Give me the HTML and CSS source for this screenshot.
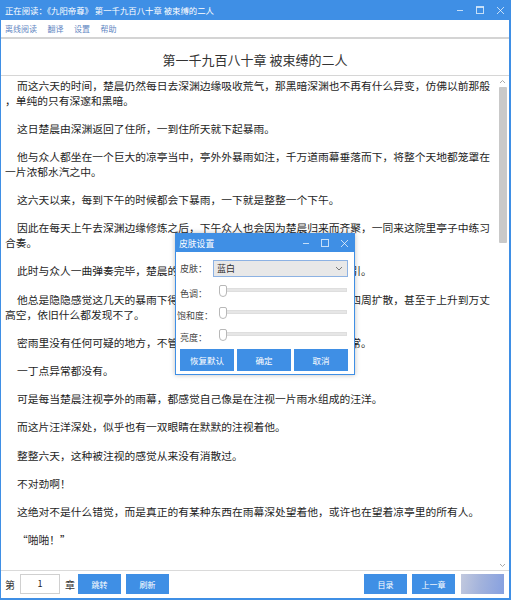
FILE: index.html
```html
<!DOCTYPE html>
<html lang="zh-CN">
<head>
  <meta charset="UTF-8">
  <title>正在阅读：《九阳帝尊》</title>
  <link rel="stylesheet" href="styles.css">
</head>
<body>
<div class="window">
  <div class="titlebar">
    <span class="title">正在阅读：《九阳帝尊》 第一千九百八十章 被束缚的二人</span>
    <div class="win-buttons">
      <svg width="8" height="8" viewBox="0 0 8 8"><path d="M1 4.5H7" stroke="currentColor" stroke-width="1"/></svg>
      <svg width="10" height="8" viewBox="0 0 10 8"><rect x="1.5" y="0.5" width="7" height="7" fill="none" stroke="currentColor" stroke-width="1"/><path d="M1.5 1.5H8.5" stroke="currentColor"/></svg>
      <svg width="9" height="9" viewBox="0 0 9 9"><path d="M1 1L8 8M8 1L1 8" stroke="currentColor" stroke-width="1"/></svg>
    </div>
  </div>

  <div class="menubar">
    <span>离线阅读</span><span>翻译</span><span>设置</span><span>帮助</span>
  </div>

  <div class="chapter-head">
    <h1>第一千九百八十章 被束缚的二人</h1>
  </div>

  <div class="reader">
    <div class="text">
      <p>而这六天的时间，楚晨仍然每日去深渊边缘吸收荒气，那黑暗深渊也不再有什么异变，仿佛以前那般<br>，单纯的只有深邃和黑暗。</p>
      <p>这日楚晨由深渊返回了住所，一到住所天就下起暴雨。</p>
      <p>他与众人都坐在一个巨大的凉亭当中，亭外外暴雨如注，千万道雨幕垂落而下，将整个天地都笼罩在<br>一片浓郁水汽之中。</p>
      <p>这六天以来，每到下午的时候都会下暴雨，一下就是整整一个下午。</p>
      <p>因此在每天上午去深渊边缘修炼之后，下午众人也会因为楚晨归来而齐聚，一同来这院里亭子中练习<br>合奏。</p>
      <p>此时与众人一曲弹奏完毕，楚晨的目光再一次被亭外那无边的雨幕所吸引。</p>
      <p>他总是隐隐感觉这几天的暴雨下得有些古怪，可是他将神识释放出去向四周扩散，甚至于上升到万丈<br>高空，依旧什么都发现不了。</p>
      <p>密雨里没有任何可疑的地方，不管他如何仔细地探查，都没有任何的异常。</p>
      <p>一丁点异常都没有。</p>
      <p>可是每当楚晨注视亭外的雨幕，都感觉自己像是在注视一片雨水组成的汪洋。</p>
      <p>而这片汪洋深处，似乎也有一双眼睛在默默的注视着他。</p>
      <p>整整六天，这种被注视的感觉从来没有消散过。</p>
      <p>不对劲啊！</p>
      <p>这绝对不是什么错觉，而是真正的有某种东西在雨幕深处望着他，或许也在望着凉亭里的所有人。</p>
      <p>“啪啪！”</p>
    </div>
    <div class="scrollbar">
      <svg class="arrow" width="7" height="5" viewBox="0 0 7 5"><path d="M1 4L3.5 1.5L6 4" fill="none" stroke="#a8a8a8"/></svg>
      <div class="track"><div class="thumb"></div></div>
      <svg class="arrow" width="7" height="5" viewBox="0 0 7 5"><path d="M1 1L3.5 3.5L6 1" fill="none" stroke="#a8a8a8"/></svg>
    </div>
  </div>

  <div class="bottombar">
    <div class="group">
      <span class="word">第</span>
      <div class="page-input">1</div>
      <span class="word">章</span>
      <button class="btn">跳转</button>
      <button class="btn">刷新</button>
    </div>
    <div class="group">
      <button class="btn">目录</button>
      <button class="btn">上一章</button>
      <button class="btn faded"></button>
    </div>
  </div>

  <div class="dialog">
    <div class="dlg-title">
      <span>皮肤设置</span>
      <div class="win-buttons small">
        <svg width="8" height="8" viewBox="0 0 8 8"><path d="M1 4.5H7" stroke="currentColor" stroke-width="1"/></svg>
        <svg width="10" height="8" viewBox="0 0 10 8"><rect x="1.5" y="0.5" width="7" height="7" fill="none" stroke="currentColor" stroke-width="1"/></svg>
        <svg width="9" height="9" viewBox="0 0 9 9"><path d="M1 1L8 8M8 1L1 8" stroke="currentColor" stroke-width="1"/></svg>
      </div>
    </div>
    <div class="dlg-body">
      <div class="row skin">
        <span class="label">皮肤：</span>
        <div class="select">
          <span>蓝白</span>
          <svg width="8" height="5" viewBox="0 0 8 5"><path d="M1 1L4 4L7 1" fill="none" stroke="#777"/></svg>
        </div>
      </div>
      <div class="row">
        <span class="label">色调：</span>
        <div class="slider"><div class="knob"></div></div>
      </div>
      <div class="row">
        <span class="label wide">饱和度：</span>
        <div class="slider"><div class="knob"></div></div>
      </div>
      <div class="row">
        <span class="label">亮度：</span>
        <div class="slider"><div class="knob"></div></div>
      </div>
      <div class="dlg-actions">
        <button class="btn">恢复默认</button>
        <button class="btn">确定</button>
        <button class="btn">取消</button>
      </div>
    </div>
  </div>
</div>
</body>
</html>
```

FILE: styles.css
```css
body {
  margin: 0;
  font-family: "Noto Sans CJK SC", "Microsoft YaHei", sans-serif;
  overflow: hidden;
}
.window {
  position: relative;
  width: 511px;
  height: 600px;
  box-sizing: border-box;
  background: #3f8fe5;
  padding: 0 2px 2px 1px;
  display: flex;
  flex-direction: column;
}
.titlebar {
  height: 20px;
  flex: none;
  display: flex;
  align-items: center;
  justify-content: space-between;
  padding-left: 4px;
  color: #fff;
}
.title {
  font-size: 8.4px;
  white-space: nowrap;
}
.win-buttons {
  display: flex;
  align-items: center;
  gap: 11px;
  padding-right: 4px;
  color: rgba(255,255,255,0.7);
}
.win-buttons svg {
  display: block;
}
.menubar {
  height: 17px;
  flex: none;
  background: #fff;
  border-bottom: 2px solid #d4d4d4;
  display: flex;
  align-items: center;
  gap: 10.5px;
  padding-left: 4px;
  font-size: 8px;
  color: #5f86c2;
}
.chapter-head {
  height: 36px;
  flex: none;
  background: #fff;
  border-bottom: 1px solid #d6d6d6;
  display: flex;
  align-items: center;
  justify-content: center;
}
.chapter-head h1 {
  margin: 5px 0 0;
  font-size: 13px;
  font-weight: normal;
  color: #333;
}
.reader {
  flex: 1;
  min-height: 0;
  background: #fff;
  display: flex;
}
.text {
  flex: 1;
  padding: 1.5px 0 0 4px;
  font-size: 10.75px;
  line-height: 15px;
  color: #1e1e1e;
  white-space: nowrap;
  overflow: hidden;
}
.text p {
  margin: 0 0 13.2px;
  text-indent: 12px;
}
.scrollbar {
  width: 13px;
  display: flex;
  flex-direction: column;
  align-items: center;
  padding: 3px 0 2px;
  box-sizing: border-box;
}
.scrollbar .arrow {
  flex: none;
}
.track {
  flex: 1;
  width: 8px;
  padding-top: 3px;
}
.thumb {
  height: 156px;
  background: #c9c9c9;
  border-radius: 1px;
}
.bottombar {
  height: 24px;
  flex: none;
  background: #fff;
  border-top: 1px solid #dadada;
  display: flex;
  justify-content: space-between;
  align-items: flex-start;
  padding: 3px 5px 0 4px;
  box-sizing: content-box;
}
.group {
  display: flex;
  align-items: center;
  gap: 5px;
}
.word {
  font-size: 10px;
  color: #333;
}
.page-input {
  width: 40px;
  height: 20px;
  box-sizing: border-box;
  border: 1px solid #d0d0d0;
  font-size: 9px;
  line-height: 18px;
  text-align: center;
  color: #222;
}
.btn {
  width: 43px;
  height: 20px;
  border: none;
  padding: 0;
  background: #3f8fe5;
  color: #fff;
  font-family: inherit;
  font-size: 8px;
}
.group .word + .btn {
  margin-left: -2px;
}
.btn.faded {
  margin-left: 1px;
  background: linear-gradient(100deg, #c2c9de 0%, #a3b3dc 45%, #86a0e0 100%);
}
.dialog {
  position: absolute;
  left: 175px;
  top: 233px;
  width: 180px;
  height: 142px;
  box-sizing: border-box;
  border: 1px solid #3f8fe5;
  background: #fff;
  box-shadow: 0 0 5px rgba(0,0,0,0.25);
}
.dlg-title {
  height: 18px;
  background: #3f8fe5;
  color: #fff;
  font-size: 8.8px;
  display: flex;
  align-items: center;
  justify-content: space-between;
  padding-left: 3px;
}
.win-buttons.small {
  gap: 10px;
  padding-right: 5px;
}
.dlg-body {
  padding: 8px 5px 0 4px;
}
.row {
  display: flex;
  align-items: center;
  height: 22px;
  font-size: 9px;
  color: #444;
}
.row.skin {
  height: 17px;
  margin-bottom: 5px;
}
.label {
  width: 33px;
  flex: none;
}
.label.wide {
  margin-left: -3px;
  width: 36px;
}
.select {
  width: 135px;
  height: 17px;
  box-sizing: border-box;
  border: 1px solid #8db2e3;
  background: #e8e8e8;
  display: flex;
  align-items: center;
  justify-content: space-between;
  padding: 0 4px 0 3px;
  color: #333;
}
.slider {
  position: relative;
  margin-left: 7px;
  width: 125px;
  height: 2px;
  background: #e6e6e6;
  border: 1px solid #dedede;
  margin-top: -6px;
}
.knob {
  position: absolute;
  left: -2px;
  top: -4px;
  width: 6px;
  height: 10px;
  background: #fff;
  border: 1px solid #b8b8b8;
  border-radius: 2px 2px 4px 4px;
}
.dlg-actions {
  display: flex;
  gap: 3px;
  margin-top: 1px;
}
.dlg-actions .btn {
  width: 54px;
  height: 22px;
  font-size: 8.5px;
}
```
